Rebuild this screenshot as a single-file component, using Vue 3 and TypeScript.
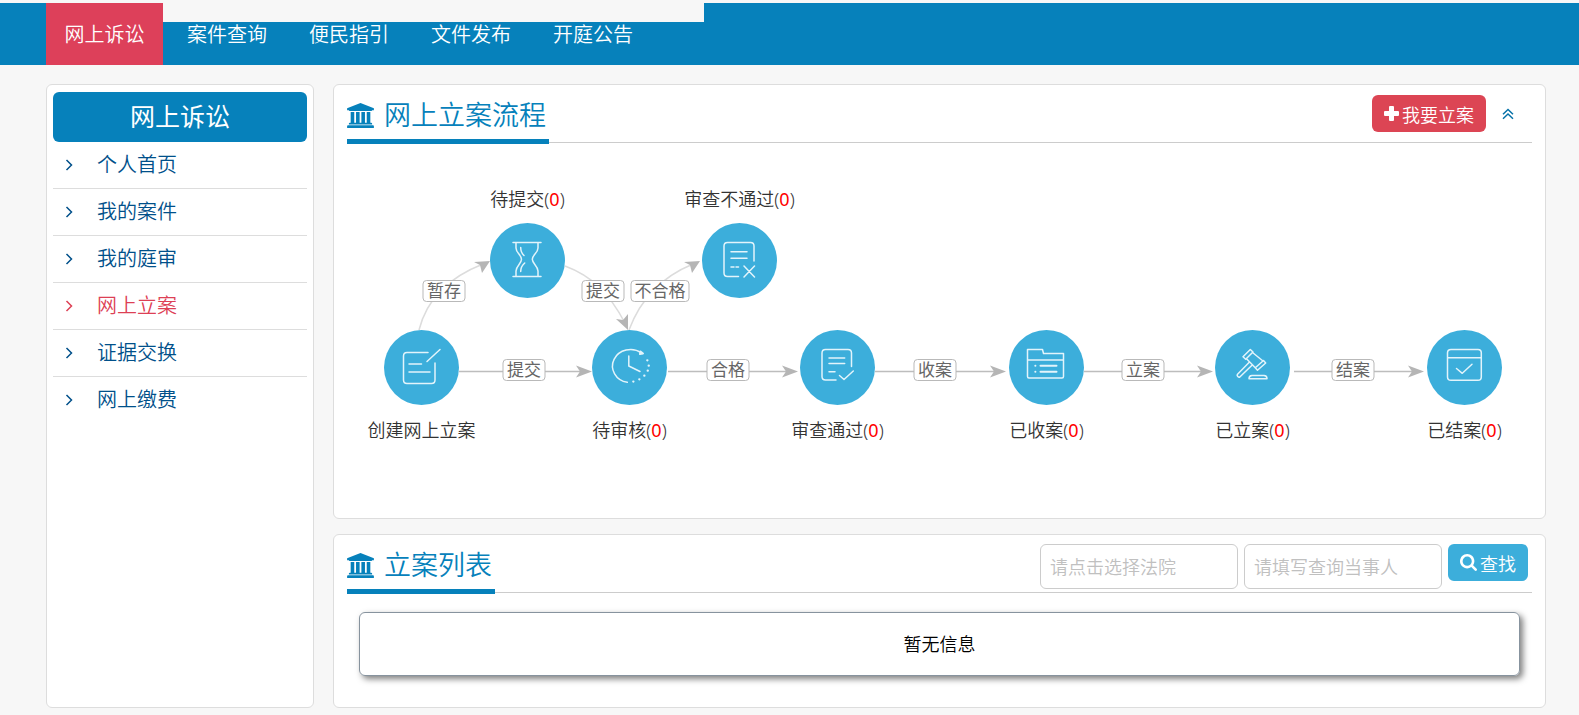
<script setup lang="ts">
import { ref } from 'vue'

interface FlowNode {
  id: string
  x: number
  y: number
  label: string
  count: number | null
  labelTop: boolean
}

interface FlowTag {
  text: string
  x: number
  y: number
}

const navItems: string[] = ['网上诉讼', '案件查询', '便民指引', '文件发布', '开庭公告']
const sideItems: string[] = ['个人首页', '我的案件', '我的庭审', '网上立案', '证据交换', '网上缴费']
const activeNav = '网上诉讼'
const activeSide = '网上立案'

const nodes: FlowNode[] = [
  { id: 'create', x: 75, y: 225, label: '创建网上立案', count: null, labelTop: false },
  { id: 'draft', x: 181, y: 118, label: '待提交', count: 0, labelTop: true },
  { id: 'audit', x: 283, y: 225, label: '待审核', count: 0, labelTop: false },
  { id: 'fail', x: 393, y: 118, label: '审查不通过', count: 0, labelTop: true },
  { id: 'pass', x: 491, y: 225, label: '审查通过', count: 0, labelTop: false },
  { id: 'received', x: 700, y: 225, label: '已收案', count: 0, labelTop: false },
  { id: 'filed', x: 906, y: 225, label: '已立案', count: 0, labelTop: false },
  { id: 'closed', x: 1118, y: 225, label: '已结案', count: 0, labelTop: false },
]

const tags: FlowTag[] = [
  { text: '暂存', x: 97, y: 148 },
  { text: '提交', x: 256, y: 148 },
  { text: '不合格', x: 313, y: 148 },
  { text: '提交', x: 177, y: 227 },
  { text: '合格', x: 381, y: 227 },
  { text: '收案', x: 588, y: 227 },
  { text: '立案', x: 796, y: 227 },
  { text: '结案', x: 1006, y: 227 },
]

const straight: { from: number; to: number }[] = [
  { from: 112, to: 245 },
  { from: 321, to: 451 },
  { from: 528, to: 659 },
  { from: 737, to: 866 },
  { from: 947, to: 1077 },
]

const open = ref(true)
const court = ref('')
const party = ref('')
</script>

<template>
  <div class="page">
    <header class="topbar">
      <nav class="nav">
        <a v-for="item in navItems" :key="item" href="#" :class="['nav-link', { active: item === activeNav }]">{{ item }}</a>
      </nav>
      <div class="mask"></div>
    </header>

    <div class="body">
      <aside class="sidebar">
        <h2 class="side-title">网上诉讼</h2>
        <ul class="side-list">
          <li v-for="item in sideItems" :key="item">
            <a href="#" :class="['side-link', { active: item === activeSide }]">
              <svg width="8" height="12" viewBox="0 0 8 12"><path d="M1.5 1 6.5 6l-5 5" fill="none" stroke="currentColor" stroke-width="1.5" /></svg>
              <span>{{ item }}</span>
            </a>
          </li>
        </ul>
      </aside>

      <main class="main">
        <section class="panel">
          <div class="panel-head">
            <h2 class="title">
              <svg class="bank" viewBox="0 0 1920 1792"><path fill="currentColor" d="M960 0l960 384v128h-128q0 26-20.500 45t-48.500 19h-1526q-28 0-48.500-19t-20.500-45h-128v-128zm-704 640h256v768h128v-768h256v768h128v-768h256v768h128v-768h256v768h59q28 0 48.500 19t20.500 45v64h-1664v-64q0-26 20.500-45t48.500-19h59v-768zm1595 960q28 0 48.500 19t20.500 45v128h-1920v-128q0-26 20.500-45t48.500-19h1782z" /></svg>
              <span>网上立案流程</span>
            </h2>
            <div class="actions">
              <button type="button" class="btn danger">
                <svg width="15" height="15" viewBox="0 0 15 15"><path fill="currentColor" d="M6 0h3q1 0 1 1v4h4q1 0 1 1v3q0 1-1 1h-4v4q0 1-1 1h-3q-1 0-1-1v-4h-4q-1 0-1-1v-3q0-1 1-1h4v-4q0-1 1-1z" /></svg>
                <span>我要立案</span>
              </button>
              <button type="button" class="toggle" aria-label="收起" @click="open = !open">
                <svg width="12" height="12" viewBox="0 0 12 12"><path d="M1 6.200 6 1.500l5 4.700M1 10.700 6 6l5 4.700" fill="none" stroke="currentColor" stroke-width="1.500" /></svg>
              </button>
            </div>
          </div>

          <div v-show="open" class="flow-wrap">
            <div class="flow">
              <svg class="lines" width="1185" height="375" viewBox="0 0 1185 375">
                <g fill="none" stroke="#bdbdbd" stroke-width="1.500">
                  <path v-for="l in straight" :key="l.from" :d="`M${l.from} 228.500H${l.to - 10}`" />
                </g>
                <g fill="none" stroke="#dcdcdc" stroke-width="1.500">
                  <path d="M72 187C78 163 95 137 136 121" />
                  <path d="M218 123C245 133 262 150 278 180" />
                  <path d="M282 187C292 160 312 135 346 121" />
                </g>
                <g fill="#b5b5b5">
                  <path v-for="l in straight" :key="l.to" :d="`M${l.to} 228.500l-16-6 4 6-4 6z`" />
                  <path d="M143 118l-16 1 6 3 2 8z" />
                  <path d="M281 187l-12-11 7 1 5-6z" />
                  <path d="M353 118l-16 1 6 3 2 8z" />
                </g>
              </svg>

              <span v-for="t in tags" :key="t.x" class="tag" :style="{ left: t.x + 'px', top: t.y + 'px' }">{{ t.text }}</span>

              <a v-for="n in nodes" :key="n.id" href="#" :class="['node', { top: n.labelTop }]" :style="{ left: n.x + 'px', top: n.y + 'px' }">
                <svg width="75" height="75" viewBox="0 0 75 75">
                  <circle cx="37.500" cy="37.500" r="37.500" fill="#3caedb" />
                  <g fill="none" stroke="#e2f4fb" stroke-width="1.500" stroke-linecap="round" stroke-linejoin="round">
                    <path v-if="n.id === 'create'" d="M44 22.500H23q-3.500 0-3.500 3.500V50q0 3.500 3.500 3.500H47.500q3.500 0 3.500-3.500V33M25 34h12.500M25 42h21M43 31.500 56 19.500" />
                    <path v-else-if="n.id === 'draft'" d="M23 19.500H51M23 53.500H51M26 19.500V25C26 30 31.500 32 31.500 36.300S26 43 26 48v5.500M48 19.500V25C48 30 42.300 32 42.300 36.300S48 43 48 48v5.500M30.700 24.500q0 5 3.300 8M30.700 48.500q0-5 4-8.500" />
                    <template v-else-if="n.id === 'audit'">
                      <path d="M49.500 23A18 16.500 0 1 0 35.300 52.300M36.800 26V36L48 41.500" />
                      <path d="M48.500 21.500l2.500 2-3 .5z" stroke-width="2" />
                      <path stroke-width="2.300" d="M55.300 30.300h.1M56.700 35.700h.1M55.700 40.700h.1M52.300 45.700h.1M47.300 49.300h.1M41.300 51.600h.1" />
                    </template>
                    <path v-else-if="n.id === 'fail'" d="M36.500 53.500H25.500q-3.500 0-3.500-3.500V23q0-3.500 3.500-3.500H48.500q3.500 0 3.500 3.500V38M29 28.700H45M29 35.300H45M29 44h3M34 44h2.500M42 43 52.500 54M52.500 43 42 54" />
                    <path v-else-if="n.id === 'pass'" d="M36 50H25.500q-3.500 0-3.500-3.500V23q0-3.500 3.500-3.500H48q3.500 0 3.500 3.500V36.500M29 28H44.700M29 33.500H44.700M29 41.700h6M39.500 45.500 44 49.500 53.300 41" />
                    <template v-else-if="n.id === 'received'">
                      <path d="M18.500 19.500H33.500L34.500 23.500H54.500V46.500q0 1.500-1.500 1.500H20q-1.500 0-1.500-1.500zM18.500 30H54.500" />
                      <path stroke-width="2" d="M26.300 35.700h.1M31.500 35.700H47.500M26.300 41.700h.1M31.500 41.700H47.500" />
                    </template>
                    <path v-else-if="n.id === 'filed'" d="M28 26.700 35.300 19.500 38 22 30.700 29.300zM31.500 28.700 40.500 38M37.500 22.500 48 31M40.300 37.800 48.500 30.500 50.700 33 42.500 40.200zM34.500 32 22.300 44.500q-.5 1 .5 2t2 .5L37.500 34.700M34 48.700q0-3 3-3.200H49q3 .2 3 3.200z" />
                    <path v-else d="M24 19.500H51q3.300 0 3.300 3.300V47q0 3.300-3.300 3.300H24q-3.500 0-3.500-3.300V22.800q0-3.300 3.500-3.300zM20.500 27.700H54.300M29.500 38.500 35.300 43.300 45 34.300" />
                  </g>
                </svg>
                <span class="node-label">{{ n.label }}<template v-if="n.count !== null">(<b>{{ n.count }}</b>)</template></span>
              </a>
            </div>
          </div>
        </section>

        <section class="panel">
          <div class="panel-head">
            <h2 class="title">
              <svg class="bank" viewBox="0 0 1920 1792"><path fill="currentColor" d="M960 0l960 384v128h-128q0 26-20.500 45t-48.500 19h-1526q-28 0-48.500-19t-20.500-45h-128v-128zm-704 640h256v768h128v-768h256v768h128v-768h256v768h128v-768h256v768h59q28 0 48.500 19t20.500 45v64h-1664v-64q0-26 20.500-45t48.500-19h59v-768zm1595 960q28 0 48.500 19t20.500 45v128h-1920v-128q0-26 20.500-45t48.500-19h1782z" /></svg>
              <span>立案列表</span>
            </h2>
            <form class="actions search" @submit.prevent>
              <input v-model="court" type="text" class="field" placeholder="请点击选择法院" aria-label="法院" />
              <input v-model="party" type="text" class="field" placeholder="请填写查询当事人" aria-label="当事人" />
              <button type="submit" class="btn info">
                <svg width="17" height="17" viewBox="64 128 1664 1664"><path fill="currentColor" d="M1216 832q0-185-131.500-316.500t-316.500-131.500-316.500 131.500-131.500 316.500 131.500 316.500 316.500 131.500 316.500-131.500 131.500-316.500zm512 832q0 52-38 90t-90 38q-54 0-90-38l-343-342q-179 124-399 124-143 0-273.500-55.500t-225-150-150-225-55.500-273.500 55.500-273.500 150-225 225-150 273.500-55.500 273.500 55.500 225 150 150 225 55.500 273.500q0 220-124 399l343 343q37 37 37 90z" /></svg>
                <span>查找</span>
              </button>
            </form>
          </div>
          <div class="empty">暂无信息</div>
        </section>
      </main>
    </div>
  </div>
</template>

<style>
body {
  margin: 0;
  background: #f7f7f7;
}
</style>

<style scoped>
.page {
  font-family: "Noto Sans", "Noto Sans CJK SC", sans-serif;
  font-size: 18px;
  font-weight: 350;
  color: #333;
}
.page * {
  box-sizing: border-box;
}
a {
  text-decoration: none;
}
button {
  font: inherit;
  cursor: pointer;
}
svg {
  display: block;
  flex: none;
}
.topbar {
  position: relative;
  padding-top: 3px;
}
.nav {
  display: flex;
  padding-left: 46px;
  background: #0681bb;
}
.nav-link {
  width: 122px;
  height: 62px;
  line-height: 64px;
  font-size: 20px;
  text-align: center;
  color: #fff;
}
.nav-link.active {
  width: 117px;
  margin-right: 3px;
  background: #dd405a;
}
.mask {
  position: absolute;
  left: 163px;
  top: 0;
  width: 541px;
  height: 22px;
  background: #f7f7f7;
}
.body {
  display: flex;
  gap: 19px;
  padding: 19px 33px 7px 46px;
}
.sidebar,
.panel {
  background: #fff;
  border: 1px solid #ddd;
  border-radius: 6px;
}
.sidebar {
  flex: none;
  width: 268px;
  padding: 7px 6px;
}
.side-title {
  margin: 0;
  height: 50px;
  line-height: 48px;
  border-radius: 6px;
  background: #0681bb;
  color: #fff;
  font-size: 25px;
  font-weight: 400;
  text-align: center;
}
.side-list {
  margin: 0;
  padding: 0;
  list-style: none;
}
.side-list li + li {
  border-top: 1px solid #ddd;
}
.side-link {
  display: flex;
  align-items: center;
  gap: 24px;
  height: 46px;
  padding-left: 12px;
  font-size: 20px;
  line-height: 44px;
  color: #00508a;
}
.side-link.active {
  color: #dd4055;
}
.main {
  flex: 1;
  min-width: 0;
  display: flex;
  flex-direction: column;
  gap: 15px;
}
.panel {
  padding: 0 13px;
}
.panel-head {
  display: flex;
  justify-content: space-between;
  height: 58px;
  border-bottom: 1px solid #ccc;
}
.title {
  display: flex;
  align-items: center;
  gap: 10px;
  height: 59px;
  margin: 0;
  padding: 6px 3px 0 0;
  border-bottom: 5px solid #0681bb;
  font-size: 27px;
  font-weight: 350;
  line-height: 40px;
  color: #0681bb;
}
.bank {
  width: 27px;
  height: 25px;
}
.actions {
  display: flex;
  align-items: flex-start;
  padding-top: 10px;
}
.search {
  gap: 6px;
  padding: 9px 4px 0 0;
}
.btn {
  display: flex;
  align-items: center;
  gap: 3px;
  height: 37px;
  padding: 0 12px;
  border: 0;
  border-radius: 6px;
  color: #fff;
  white-space: nowrap;
}
.danger {
  background: #dc4554;
}
.info {
  background: #3caedb;
}
.toggle {
  display: flex;
  align-items: center;
  justify-content: center;
  width: 46px;
  height: 37px;
  padding: 0 2px 0 0;
  border: 0;
  background: none;
  color: #0671a8;
}
.field {
  width: 198px;
  height: 45px;
  padding: 0 9px;
  border: 1px solid #ccc;
  border-radius: 6px;
  background: #fff;
  font: inherit;
  color: #333;
}
.field::placeholder {
  color: #c0c0c0;
}
.flow-wrap {
  overflow-x: auto;
  overflow-y: hidden;
}
.flow {
  position: relative;
  width: 1185px;
  height: 375px;
  margin: 0 auto;
}
.tag {
  position: absolute;
  min-width: 43px;
  height: 22px;
  transform: translate(-50%, -50%);
  border: 1px solid #b9b9b9;
  border-radius: 4px;
  padding: 0 3px;
  background: #fff;
  font-size: 17px;
  font-weight: 400;
  line-height: 20px;
  text-align: center;
  color: #666;
  white-space: nowrap;
}
.node {
  position: absolute;
  display: flex;
  flex-direction: column;
  align-items: center;
  width: 75px;
  margin: -38px 0 0 -38px;
  color: #333;
}
.node.top {
  flex-direction: column-reverse;
  margin-top: -74px;
}
.node-label {
  height: 24px;
  margin: 13px 0;
  line-height: 24px;
  white-space: nowrap;
}
.node.top .node-label {
  margin: 0 0 12px;
}
.node-label b {
  font-weight: 400;
  color: #f00;
}
.empty {
  margin: 19px 12px 31px;
  height: 64px;
  line-height: 62px;
  border: 1px solid #87939e;
  border-radius: 6px;
  box-shadow: 3px 3px 6px rgba(0, 0, 0, 0.5);
  text-align: center;
  color: #000;
}
</style>
